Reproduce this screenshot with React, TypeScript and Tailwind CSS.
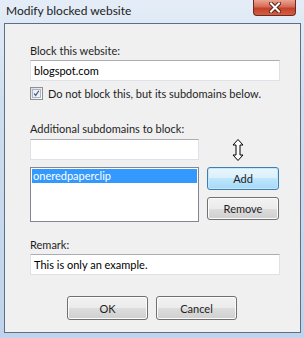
import React from "react";

const font = { fontFamily: 'Lato, "Segoe UI", sans-serif' };

const Button = ({ label, focused, className }: { label: string; focused?: boolean; className?: string }) => (
  <button
    className={
      "h-[23px] rounded-[3px] border text-[11px] text-[#1e1e1e] leading-none " +
      (focused
        ? "border-[#3c7fb1] bg-[linear-gradient(#eaf6fd_0%,#d9f0fc_50%,#bee6fd_50%,#a7d9f5_100%)] shadow-[inset_0_0_0_1px_#c6e7f8] "
        : "border-[#707070] bg-[linear-gradient(#f2f2f2_0%,#ebebeb_50%,#dddddd_50%,#cfcfcf_100%)] shadow-[inset_0_0_0_1px_#fcfcfc] ") +
      (className ?? "")
    }
  >
    {label}
  </button>
);

const TextBox = ({ value, className }: { value?: string; className?: string }) => (
  <div
    className={
      "h-[21px] border border-[#dde1e8] border-t-[#abadb3] bg-white px-[3px] text-[11px] leading-[19px] text-black whitespace-nowrap " +
      (className ?? "")
    }
  >
    {value}
  </div>
);

export default function App() {
  return (
    <div
      style={font}
      className="w-[304px] h-[338px] flex flex-col bg-[linear-gradient(180deg,#e4edf7_0%,#cfdeef_30%,#bfd3ea_100%)]"
    >
      {/* title bar */}
      <div className="h-[23px] flex items-start justify-between pl-[6px] pr-[8px]">
        <span className="text-[12px] leading-[16px] mt-[3px] text-[#1b1b1b] whitespace-nowrap">Modify blocked website</span>
        <div className="w-[43px] h-[16px] rounded-b-[4px] border border-t-0 border-[#6b2a20] bg-[linear-gradient(#eaa493_0%,#d66b55_45%,#c3412a_55%,#d45f42_100%)] flex items-center justify-center">
          <svg width="12" height="11" viewBox="0 0 12 11">
            <path d="M2 1.5 L10 9.5 M10 1.5 L2 9.5" stroke="#5b1f16" strokeWidth="4" strokeLinecap="square" />
            <path d="M2 1.5 L10 9.5 M10 1.5 L2 9.5" stroke="#ffffff" strokeWidth="2" strokeLinecap="square" />
          </svg>
        </div>
      </div>

      {/* client area */}
      <div className="ml-[4px] mr-[3px] h-[310px] border border-[#5b6f86] bg-[#f0f0f0] pl-[25px] pr-[20px] text-[11px] text-[#1e1e1e] whitespace-nowrap">
        <div className="mt-[19px] leading-[16px]">Block this website:</div>
        <TextBox value="blogspot.com" className="mt-[1px]" />

        <div className="mt-[5px] flex items-center gap-[5px] h-[15px]">
          <div className="w-[13px] h-[13px] border border-[#8e8f8f] bg-[linear-gradient(135deg,#dcdcdc,#ffffff)] p-[1px]">
            <div className="w-full h-full border border-[#aab4c6] bg-[#eef1f6] flex items-center justify-center">
              <svg width="9" height="9" viewBox="0 0 9 9">
                <path d="M1.5 4.5 L3.5 7 L7.5 1" stroke="#4d6185" strokeWidth="1.6" fill="none" />
              </svg>
            </div>
          </div>
          <span className="leading-[16px]">Do not block this, but its subdomains below.</span>
        </div>

        <div className="mt-[20px] leading-[16px]">Additional subdomains to block:</div>
        <div className="flex mt-[2px]">
          <div className="w-[169px] flex flex-col">
            <TextBox />
            <div className="mt-[7px] h-[55px] border border-[#828790] bg-white p-[1px]">
              <div className="h-[14px] bg-[#3399ff] text-white leading-[13px] px-[1px]">oneredpaperclip</div>
            </div>
          </div>
          <div className="ml-[8px] w-[72px] flex flex-col">
            <div className="h-[28px] flex justify-center">
              <svg width="12" height="22" viewBox="0 0 12 22" className="mr-[10px]">
                <path
                  d="M6 0.5 L11 6 L8 6 L8 16 L11 16 L6 21.5 L1 16 L4 16 L4 6 L1 6 Z"
                  fill="#ffffff"
                  stroke="#000000"
                  strokeWidth="1"
                  strokeLinejoin="miter"
                />
              </svg>
            </div>
            <Button label="Add" focused className="w-[72px] h-[22px]" />
            <Button label="Remove" className="w-[72px] mt-[7px] h-[22px]" />
          </div>
        </div>

        <div className="mt-[15px] leading-[16px]">Remark:</div>
        <TextBox value="This is only an example." className="mt-[1px]" />

        <div className="mt-[21px] flex gap-[8px] ml-[37px]">
          <Button label="OK" className="w-[81px] h-[24px]" />
          <Button label="Cancel" className="w-[81px] h-[24px]" />
        </div>
      </div>
    </div>
  );
}
